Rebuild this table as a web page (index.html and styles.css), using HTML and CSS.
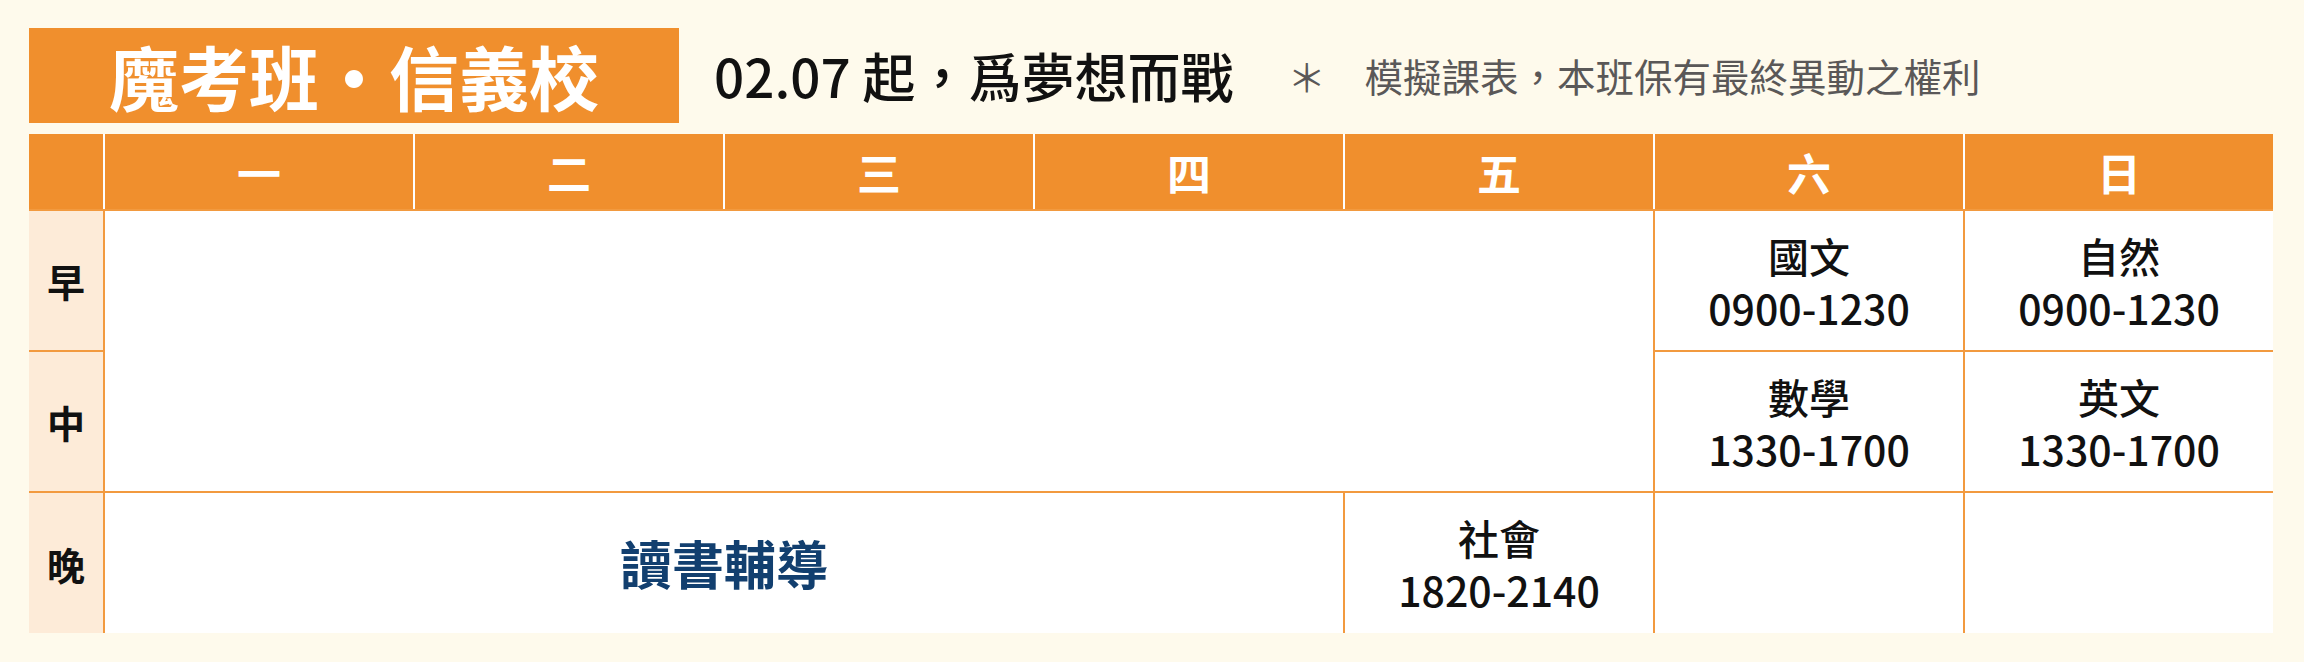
FILE: index.html
```html
<!DOCTYPE html>
<html lang="zh-Hant">
<head>
<meta charset="utf-8">
<title>魔考班・信義校 課表</title>
<link rel="stylesheet" href="styles.css">
</head>
<body>
<div class="page">
  <header class="top">
    <h1 class="title">魔考班・信義校</h1>
    <p class="subtitle">02.07 起，爲夢想而戰</p>
    <p class="note">＊　模擬課表，本班保有最終異動之權利</p>
  </header>

  <div class="schedule">
    <div class="th corner"></div>
    <div class="th">一</div>
    <div class="th">二</div>
    <div class="th">三</div>
    <div class="th">四</div>
    <div class="th">五</div>
    <div class="th">六</div>
    <div class="th">日</div>

    <div class="label">早</div>
    <div class="td weekday-free"></div>
    <div class="td"><span>國文</span><span>0900-1230</span></div>
    <div class="td"><span>自然</span><span>0900-1230</span></div>

    <div class="label">中</div>
    <div class="td"><span>數學</span><span>1330-1700</span></div>
    <div class="td"><span>英文</span><span>1330-1700</span></div>

    <div class="label">晚</div>
    <div class="td study">讀書輔導</div>
    <div class="td"><span>社會</span><span>1820-2140</span></div>
    <div class="td"></div>
    <div class="td"></div>
  </div>
</div>
</body>
</html>
```

FILE: styles.css
```css
* {
  box-sizing: border-box;
}

html, body {
  margin: 0;
  padding: 0;
  background: #fefaec;
}

body {
  font-family: "Noto Sans CJK TC", "Noto Sans CJK SC", sans-serif;
  color: #111;
}

.page {
  padding: 28px 0 0 29px;
}

.top {
  display: flex;
  align-items: center;
  height: 95px;
}

.title {
  margin: 0;
  width: 650px;
  height: 95px;
  background: #f08f2d;
  color: #fff;
  font-size: 70px;
  font-weight: 700;
  line-height: 1;
  display: flex;
  align-items: center;
  justify-content: center;
}

.subtitle {
  margin: 0 0 0 35px;
  font-size: 53px;
  font-weight: 500;
  line-height: 1;
  color: #111;
}

.note {
  margin: 0 0 0 54px;
  font-size: 38.5px;
  font-weight: 400;
  line-height: 1;
  color: #5a5858;
}

.schedule {
  margin-top: 11px;
  display: grid;
  grid-template-columns: 74px repeat(7, 310px);
  grid-template-rows: 75px 141px 141px 142px;
}

.th {
  background: #f08f2d;
  color: #fff;
  font-size: 44px;
  font-weight: 700;
  display: flex;
  align-items: center;
  justify-content: center;
  border-left: 2px solid #fff;
}

.th.corner {
  border-left: none;
}

.label {
  background: #fdebd8;
  border-top: 2px solid #f29a3f;
  font-size: 38px;
  font-weight: 700;
  display: flex;
  align-items: center;
  justify-content: center;
}

.td {
  background: #fff;
  border-left: 2px solid #f29a3f;
  border-top: 2px solid #f29a3f;
  display: flex;
  flex-direction: column;
  align-items: center;
  justify-content: center;
  font-size: 41px;
  font-weight: 500;
  line-height: 52px;
}

.weekday-free {
  grid-column: 2 / span 5;
  grid-row: 2 / span 2;
}

.study {
  grid-column: 2 / span 4;
  color: #123f6f;
  font-size: 52px;
  font-weight: 700;
}
```
